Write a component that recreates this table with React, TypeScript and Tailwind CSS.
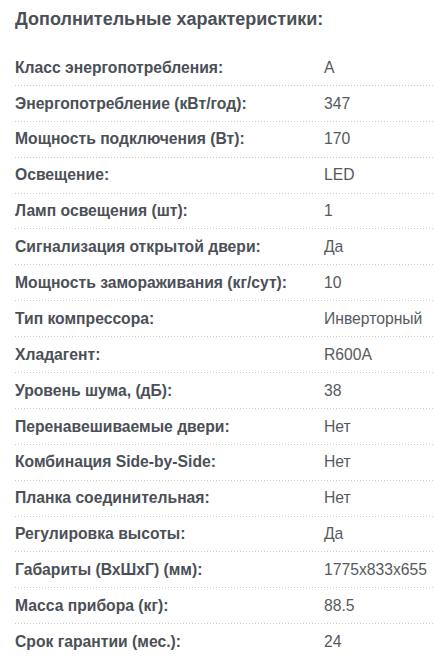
const rows: [string, string][] = [
  ["Класс энергопотребления:", "A"],
  ["Энергопотребление (кВт/год):", "347"],
  ["Мощность подключения (Вт):", "170"],
  ["Освещение:", "LED"],
  ["Ламп освещения (шт):", "1"],
  ["Сигнализация открытой двери:", "Да"],
  ["Мощность замораживания (кг/сут):", "10"],
  ["Тип компрессора:", "Инверторный"],
  ["Хладагент:", "R600A"],
  ["Уровень шума, (дБ):", "38"],
  ["Перенавешиваемые двери:", "Нет"],
  ["Комбинация Side-by-Side:", "Нет"],
  ["Планка соединительная:", "Нет"],
  ["Регулировка высоты:", "Да"],
  ["Габариты (ВхШхГ) (мм):", "1775x833x655"],
  ["Масса прибора (кг):", "88.5"],
  ["Срок гарантии (мес.):", "24"],
];

export default function App() {
  return (
    <div className="min-h-[662px] w-[435px] bg-white pl-[15px] font-['Liberation_Sans',Arial,sans-serif]">
      <h2 className="pt-[9px] text-[18px] font-bold leading-5 text-[#4b5057]">Дополнительные характеристики:</h2>
      <div className="mt-[21px]">
        {rows.map(([label, value], i) => (
          <div key={label}>
            <div className="flex h-[34.9px] items-center text-[15.7px]">
              <div className="w-[309px] font-bold text-[#4b5057]">{label}</div>
              <div className="text-[#555a60]">{value}</div>
            </div>
            {i < rows.length - 1 && (
              <div className="h-px bg-[linear-gradient(to_right,#c9c9c9_1px,transparent_1px)] bg-[length:3px_1px]" />
            )}
          </div>
        ))}
      </div>
    </div>
  );
}
